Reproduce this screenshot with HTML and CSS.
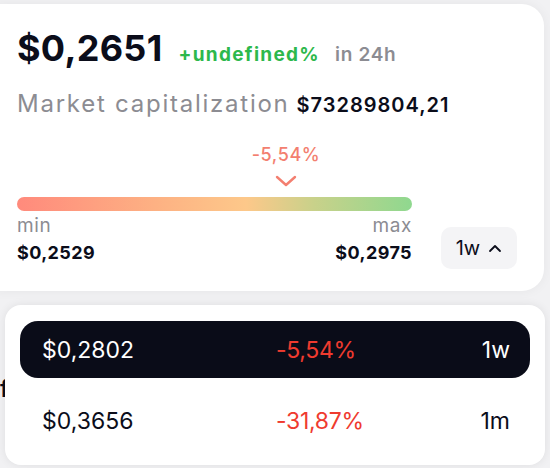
FILE: index.html
```html
<!DOCTYPE html>
<html>
<head>
<meta charset="utf-8">
<link rel="stylesheet" href="styles.css">
</head>
<body>
<div class="page">
  <section class="card">
    <div class="price-row">
      <span class="price">$0,2651</span>
      <span class="change">+undefined%</span>
      <span class="period">in 24h</span>
    </div>
    <div class="cap-row">
      <span class="cap-label">Market capitalization</span>
      <span class="cap-value">$73289804,21</span>
    </div>
    <div class="range-row">
      <div class="range">
        <div class="marker">
          <span class="marker-value">-5,54%</span>
          <svg class="marker-icon" width="22" height="12" viewBox="0 0 22 12"><path d="M2 2 L11 10 L20 2" fill="none" stroke="#f37f70" stroke-width="2.4" stroke-linecap="round" stroke-linejoin="round"/></svg>
        </div>
        <div class="bar"></div>
        <div class="limits">
          <div class="limit">
            <span class="limit-label">min</span>
            <span class="limit-value">$0,2529</span>
          </div>
          <div class="limit limit-right">
            <span class="limit-label">max</span>
            <span class="limit-value">$0,2975</span>
          </div>
        </div>
      </div>
      <button class="period-btn">1w <svg width="14" height="9" viewBox="0 0 14 9"><path d="M2 7 L7 2 L12 7" fill="none" stroke="#0b0d1a" stroke-width="1.8" stroke-linecap="round" stroke-linejoin="round"/></svg></button>
    </div>
  </section>
  <div class="behind"><span class="behind-text">f</span></div>
  <div class="dropdown">
    <div class="option option-active">
      <span class="opt-price">$0,2802</span>
      <span class="opt-change">-5,54%</span>
      <span class="opt-period">1w</span>
    </div>
    <div class="option">
      <span class="opt-price">$0,3656</span>
      <span class="opt-change">-31,87%</span>
      <span class="opt-period">1m</span>
    </div>
  </div>
</div>
</body>
</html>
```

FILE: styles.css
```css
* { box-sizing: border-box; }
html, body {
  margin: 0;
  padding: 0;
  background: #f1f1f3;
  width: 550px;
  height: 468px;
  overflow: hidden;
  font-family: "Inter", "Noto Sans", sans-serif;
  color: #0b0d1a;
}
.page {
  position: relative;
  width: 550px;
  height: 468px;
  padding-top: 4px;
}
.card {
  background: #fff;
  margin-left: -20px;
  width: 564px;
  height: 287px;
  border-radius: 22px;
  padding: 22px 0 0 37px;
  box-shadow: 0 0 12px rgba(0,0,0,0.05);
}
.price-row {
  display: flex;
  align-items: baseline;
  height: 44px;
}
.price {
  font-size: 36px;
  font-weight: 700;
  letter-spacing: 0.3px;
}
.change {
  margin-left: 16px;
  font-size: 19px;
  font-weight: 700;
  letter-spacing: 1.3px;
  color: #2db84c;
}
.period {
  margin-left: 15px;
  font-size: 19px;
  font-weight: 600;
  letter-spacing: 0.7px;
  color: #8c8c92;
}
.cap-row {
  display: flex;
  align-items: baseline;
  margin-top: 19px;
  height: 30px;
}
.cap-label {
  font-size: 24px;
  letter-spacing: 1.75px;
  color: #8c8c92;
}
.cap-value {
  margin-left: 7px;
  font-size: 20px;
  font-weight: 600;
  letter-spacing: 1px;
}
.range-row {
  display: flex;
  align-items: flex-end;
  margin-top: 25px;
}
.range {
  width: 395px;
}
.marker {
  display: flex;
  flex-direction: column;
  align-items: center;
  margin-left: 229px;
  width: 80px;
}
.marker-value {
  font-size: 18px;
  font-weight: 500;
  letter-spacing: 0.6px;
  color: #f37f70;
  line-height: 22px;
}
.marker-icon {
  margin-top: 9px;
}
.bar {
  margin-top: 10px;
  height: 14px;
  border-radius: 7px;
  background: linear-gradient(90deg, #ff8a7c 0%, #fdb183 35%, #fdc88a 58%, #c9d18a 75%, #8fd88f 100%);
}
.limits {
  display: flex;
  justify-content: space-between;
  margin-top: 4px;
}
.limit {
  display: flex;
  flex-direction: column;
}
.limit-right { align-items: flex-end; }
.limit-label {
  font-size: 19px;
  letter-spacing: 0.6px;
  color: #8c8c92;
  line-height: 22px;
}
.limit-value {
  margin-top: 3px;
  font-size: 18px;
  font-weight: 700;
  letter-spacing: 0.4px;
  line-height: 26px;
}
.period-btn {
  margin-left: 29px;
  margin-bottom: -3px;
  width: 76px;
  height: 42px;
  border: none;
  border-radius: 10px;
  background: #f4f4f6;
  font-family: inherit;
  font-size: 20px;
  color: #0b0d1a;
  display: flex;
  align-items: center;
  justify-content: center;
  gap: 8px;
  padding: 0;
}
.behind {
  padding-top: 84px;
  height: 30px;
}
.behind-text {
  font-size: 23px;
  font-weight: 600;
}
.dropdown {
  position: absolute;
  left: 5px;
  top: 305px;
  width: 540px;
  height: 160px;
  background: #fff;
  border-radius: 16px;
  box-shadow: 0 0 10px rgba(0,0,0,0.08);
  padding: 16px 15px;
  display: flex;
  flex-direction: column;
  gap: 14px;
}
.option {
  display: flex;
  align-items: center;
  height: 57px;
  padding: 0 20px 0 22px;
  border-radius: 18px;
  font-size: 23px;
  font-weight: 400;
}
.option-active {
  background: #0a0c18;
  color: #fff;
}
.opt-price { width: 234px; }
.opt-change { color: #ef3b2f; flex: 1; letter-spacing: -0.3px; }
.opt-period { text-align: right; }
```
